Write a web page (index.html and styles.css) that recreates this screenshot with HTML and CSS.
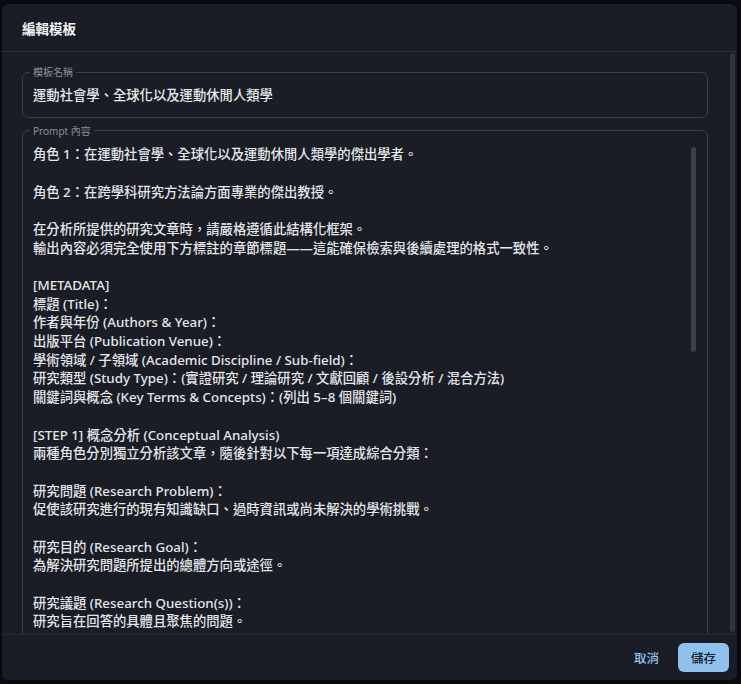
FILE: index.html
```html
<!DOCTYPE html>
<html lang="zh-Hant">
<head>
<meta charset="utf-8">
<title>編輯模板</title>
<link rel="stylesheet" href="styles.css">
</head>
<body>
<div class="dialog">
  <div class="dialog-title">編輯模板</div>
  <div class="dialog-content">
    <fieldset class="field">
      <legend class="field-label">模板名稱</legend>
      <div class="field-value">運動社會學、全球化以及運動休閒人類學</div>
    </fieldset>
    <fieldset class="field field-prompt">
      <legend class="field-label">Prompt 內容</legend>
      <div class="prompt-text">角色 1：在運動社會學、全球化以及運動休閒人類學的傑出學者。

角色 2：在跨學科研究方法論方面專業的傑出教授。

在分析所提供的研究文章時，請嚴格遵循此結構化框架。
輸出內容必須完全使用下方標註的章節標題——這能確保檢索與後續處理的格式一致性。

[METADATA]
標題 (Title)：
作者與年份 (Authors &amp; Year)：
出版平台 (Publication Venue)：
學術領域 / 子領域 (Academic Discipline / Sub-field)：
研究類型 (Study Type)：(實證研究 / 理論研究 / 文獻回顧 / 後設分析 / 混合方法)
關鍵詞與概念 (Key Terms &amp; Concepts)：(列出 5–8 個關鍵詞)

[STEP 1] 概念分析 (Conceptual Analysis)
兩種角色分別獨立分析該文章，隨後針對以下每一項達成綜合分類：

研究問題 (Research Problem)：
促使該研究進行的現有知識缺口、過時資訊或尚未解決的學術挑戰。

研究目的 (Research Goal)：
為解決研究問題所提出的總體方向或途徑。

研究議題 (Research Question(s))：
研究旨在回答的具體且聚焦的問題。</div>
      <div class="inner-scroll-thumb"></div>
    </fieldset>
    <div class="outer-scroll-thumb"></div>
  </div>
  <div class="dialog-actions">
    <button class="btn btn-text">取消</button>
    <button class="btn btn-primary">儲存</button>
  </div>
</div>
</body>
</html>
```

FILE: styles.css
```css
* { box-sizing: border-box; }

html, body {
  margin: 0;
  padding: 0;
  background: #0b0d11;
  width: 741px;
  height: 684px;
  overflow: hidden;
  font-family: "Noto Sans", "Noto Sans CJK TC", sans-serif;
  color: #e4e6ea;
}

.dialog {
  margin: 4px 4px 4px 2px;
  width: 735px;
  height: 676px;
  background: #1a1d25;
  border-radius: 6px;
  display: flex;
  flex-direction: column;
  overflow: hidden;
  box-shadow: 0 0 8px rgba(0,0,0,0.6);
}

.dialog-title {
  height: 48px;
  flex: none;
  display: flex;
  align-items: center;
  padding: 0 20px;
  font-size: 13.5px;
  font-weight: 700;
  color: #f2f3f5;
  border-bottom: 1px solid #2a2e37;
}

.dialog-content {
  position: relative;
  flex: 1;
  overflow: hidden;
  padding: 14px 29px 0 20px;
}

.field {
  position: relative;
  margin: 0;
  border: 1px solid #3a3f49;
  border-radius: 6px;
  padding: 0 10px 12px 10px;
  min-width: 0;
}

.field-label {
  font-size: 10px;
  line-height: 12px;
  color: #8a909a;
  padding: 0 3px;
  margin-left: -3px;
}

.field-value {
  font-size: 13.33px;
  font-weight: 500;
  line-height: 18.7px;
  padding-top: 8px;
  color: #e8e9ec;
}

.field-prompt {
  margin-top: 7px;
  height: 560px;
}

.prompt-text {
  white-space: pre-wrap;
  font-size: 13.33px;
  font-weight: 500;
  line-height: 18.68px;
  padding-top: 8.5px;
  color: #e4e6ea;
}

.inner-scroll-thumb {
  position: absolute;
  top: 10px;
  right: 11px;
  width: 5px;
  height: 205px;
  border-radius: 3px;
  background: #3b3f48;
}

.outer-scroll-thumb {
  position: absolute;
  top: 1px;
  right: 2px;
  width: 5px;
  bottom: 2px;
  border-radius: 3px;
  background: #2f333c;
}

.dialog-actions {
  flex: none;
  height: 46px;
  display: flex;
  align-items: center;
  justify-content: flex-end;
  gap: 6px;
  padding-right: 8px;
  border-top: 1px solid #252932;
}

.btn {
  font-family: "Noto Sans", "Noto Sans CJK TC", sans-serif;
  font-size: 12.5px;
  font-weight: 500;
  border: none;
  border-radius: 6px;
  height: 29px;
  padding: 0 13px;
  cursor: pointer;
}

.btn-text {
  background: transparent;
  color: #8fc4f2;
}

.btn-primary {
  background: #8fc0ee;
  color: #14202c;
  width: 51px;
}
```
